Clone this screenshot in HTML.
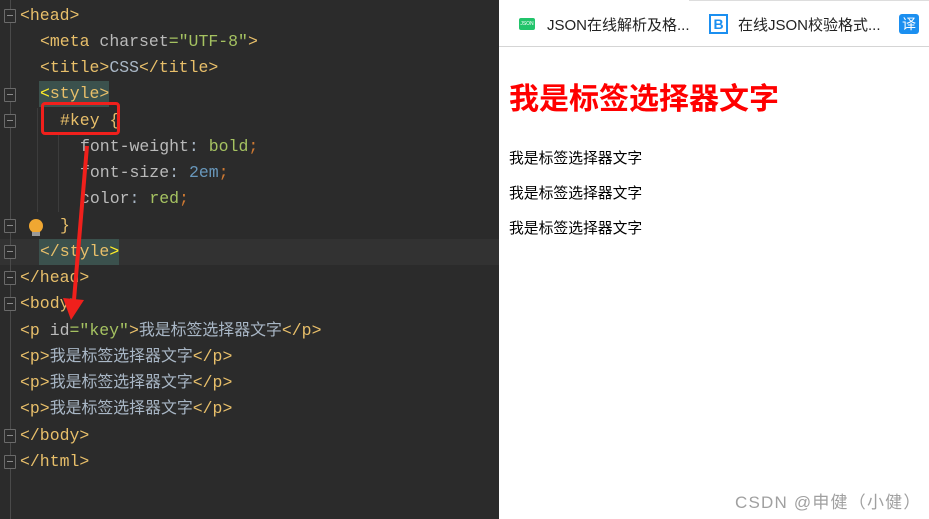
<!DOCTYPE html>
<html><head><meta charset="UTF-8"><style>
*{margin:0;padding:0;box-sizing:border-box}
body{width:929px;height:519px;overflow:hidden;position:relative;background:#fff;font-family:"Liberation Sans","Noto Sans CJK SC",sans-serif}
#ed{position:absolute;left:0;top:0;width:499px;height:519px;background:#2b2b2b}
.gl{position:absolute;left:10px;top:0;width:1px;height:519px;background:#4a4a4a}
.ln{position:absolute;height:26px;line-height:26px;font-family:"Liberation Mono","Noto Sans CJK SC",monospace;font-size:16.5px;color:#a9b7c6;white-space:pre}
.c{font-size:15.9px}
.t{color:#e8bf6a}.a{color:#bababa}.s{color:#a5c261}.o{color:#cc7832}.n{color:#6897bb}.p{color:#a9b7c6}
.fold{position:absolute;left:4px;width:12px;height:14px;border:1px solid #6a6a6a;background:#2b2b2b;border-radius:1px}
.fold:after{content:"";position:absolute;left:2px;top:5px;width:6px;height:1px;background:#8a8a8a}
#right{position:absolute;left:499px;top:0;width:430px;height:519px;background:#fff}
</style></head><body>
<div id="ed">
<div style="position:absolute;left:0;top:239px;width:499px;height:26px;background:#323232"></div>
<div class="gl"></div>
<div style="position:absolute;left:37px;top:108px;width:1px;height:104px;background:#3c3c3c"></div>
<div style="position:absolute;left:58px;top:134px;width:1px;height:78px;background:#3c3c3c"></div>
<div style="position:absolute;left:39px;top:81px;width:70px;height:26px;background:#3b514d"></div>
<div style="position:absolute;left:39px;top:239px;width:80px;height:26px;background:#3b514d"></div>

<div class="fold" style="top:9px"></div>
<div class="fold" style="top:88px"></div>
<div class="fold" style="top:114px"></div>
<div class="fold" style="top:219px"></div>
<div class="fold" style="top:245px"></div>
<div class="fold" style="top:271px"></div>
<div class="fold" style="top:297px"></div>
<div class="fold" style="top:429px"></div>
<div class="fold" style="top:455px"></div>

<div class="ln t" style="left:20px;top:3px">&lt;head&gt;</div>
<div class="ln" style="left:40px;top:29px"><span class="t">&lt;meta </span><span class="a">charset</span><span class="s">="UTF-8"</span><span class="t">&gt;</span></div>
<div class="ln" style="left:40px;top:55px"><span class="t">&lt;title&gt;</span><span class="p">CSS</span><span class="t">&lt;/title&gt;</span></div>
<div class="ln" style="left:40px;top:81px"><span style="color:#ffef28">&lt;</span><span class="t">style&gt;</span></div>
<div class="ln t" style="left:60px;top:108px">#key {</div>
<div class="ln" style="left:80px;top:134px"><span class="a">font-weight</span>: <span class="s">bold</span><span class="o">;</span></div>
<div class="ln" style="left:80px;top:160px"><span class="a">font-size</span>: <span class="n">2em</span><span class="o">;</span></div>
<div class="ln" style="left:80px;top:186px"><span class="a">color</span>: <span class="s">red</span><span class="o">;</span></div>
<div style="position:absolute;left:29px;top:219px;width:14px;height:14px;border-radius:50%;background:#f0a732"></div>
<div style="position:absolute;left:32px;top:232px;width:8px;height:4px;background:#999"></div>
<div class="ln t" style="left:60px;top:213px">}</div>
<div class="ln" style="left:40px;top:239px"><span class="t">&lt;/style</span><span style="color:#ffef28">&gt;</span></div>
<div class="ln t" style="left:20px;top:265px">&lt;/head&gt;</div>
<div class="ln t" style="left:20px;top:291px">&lt;body&gt;</div>
<div class="ln" style="left:20px;top:318px"><span class="t">&lt;p </span><span class="a">id</span><span class="s">="key"</span><span class="t">&gt;</span><span class="c">我是标签选择器文字</span><span class="t">&lt;/p&gt;</span></div>
<div class="ln" style="left:20px;top:344px"><span class="t">&lt;p&gt;</span><span class="c">我是标签选择器文字</span><span class="t">&lt;/p&gt;</span></div>
<div class="ln" style="left:20px;top:370px"><span class="t">&lt;p&gt;</span><span class="c">我是标签选择器文字</span><span class="t">&lt;/p&gt;</span></div>
<div class="ln" style="left:20px;top:396px"><span class="t">&lt;p&gt;</span><span class="c">我是标签选择器文字</span><span class="t">&lt;/p&gt;</span></div>
<div class="ln t" style="left:20px;top:423px">&lt;/body&gt;</div>
<div class="ln t" style="left:20px;top:449px">&lt;/html&gt;</div>

<div style="position:absolute;left:41px;top:102px;width:79px;height:33px;border:3px solid #f0201c;border-radius:4px"></div>
<svg style="position:absolute;left:0;top:0" width="499" height="519"><line x1="87" y1="146" x2="74" y2="300" stroke="#f0201c" stroke-width="4"/><polygon points="63,298 84,300 71,320" fill="#f0201c"/></svg>
</div>

<div id="right">
<div style="position:absolute;left:0;top:0;width:430px;height:47px;background:#fff;border-bottom:1px solid #d5d5d5"></div>
<div style="position:absolute;left:190px;top:0;width:240px;height:1px;background:#ddd"></div>
<div style="position:absolute;left:20px;top:18px;width:16px;height:12px;background:#22c46b;border-radius:2px;color:#fff;font-size:5px;line-height:12px;text-align:center">JSON</div>
<div style="position:absolute;left:48px;top:14px;font-size:15px;color:#222">JSON在线解析及格...</div>
<div style="position:absolute;left:210px;top:14px;width:19px;height:20px;border:2px solid #1b8ff0;color:#1b8ff0;font-weight:bold;font-size:14px;line-height:16px;text-align:center">B</div>
<div style="position:absolute;left:239px;top:14px;font-size:15px;color:#222">在线JSON校验格式...</div>
<div style="position:absolute;left:400px;top:14px;width:20px;height:20px;background:#1b8ff0;border-radius:3px;color:#fff;font-size:14px;line-height:20px;text-align:center">译</div>
<div style="position:absolute;left:10px;top:81px;font-size:30px;font-weight:bold;color:#ff0000;line-height:38px">我是标签选择器文字</div>
<div style="position:absolute;left:10px;top:150px;font-size:14.8px;color:#000;line-height:18px">我是标签选择器文字</div>
<div style="position:absolute;left:10px;top:185px;font-size:14.8px;color:#000;line-height:18px">我是标签选择器文字</div>
<div style="position:absolute;left:10px;top:220px;font-size:14.8px;color:#000;line-height:18px">我是标签选择器文字</div>
<div style="position:absolute;left:236px;top:488px;font-size:17px;letter-spacing:1.2px;color:#a0a0a0;white-space:nowrap">CSDN @申健（小健）</div>
</div>
</body></html>
